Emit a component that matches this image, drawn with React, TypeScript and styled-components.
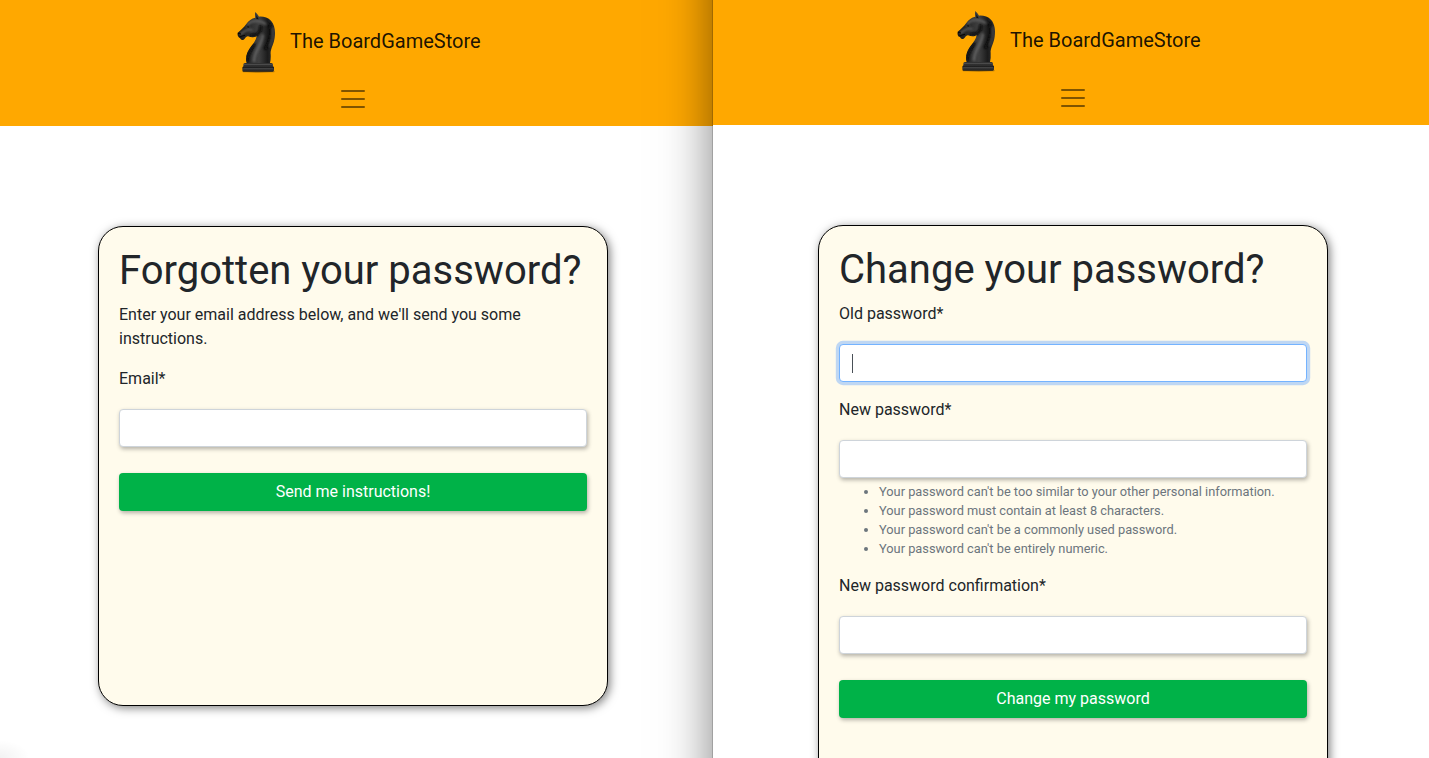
import React from "react";
import styled, { createGlobalStyle, css } from "styled-components";

const GlobalStyle = createGlobalStyle`
  *, *::before, *::after { box-sizing: border-box; }
  body {
    margin: 0;
    overflow: hidden;
    background: #fff;
    color: #212529;
    font-family: Roboto, "Liberation Sans", sans-serif;
    font-size: 16px;
    line-height: 1.5;
  }
`;

const Desktop = styled.div`
  display: flex;
  position: relative;
  width: 1429px;
  height: 758px;
  overflow: hidden;
`;

const Window = styled.section<{ $behind?: boolean }>`
  display: flex;
  flex-direction: column;
  flex: none;
  height: 758px;
  width: 720px;
  background: #fff;
  ${({ $behind }) =>
    $behind
      ? css`
          margin-left: -7px;
          padding-top: 1px;
          background: linear-gradient(#ffa800 126px, #fff 126px);
        `
      : css`
          position: relative;
          background: none;

          /* The window continues past the screen edges, so its shadow stays even. */
          &::before {
            content: "";
            position: absolute;
            inset: -100px 0;
            z-index: -1;
            background: #fff;
            box-shadow: 0 0 0 1px rgba(0, 0, 0, 0.16), 0 0 48px rgba(0, 0, 0, 0.5);
          }
          isolation: isolate;
        `}
`;

const CornerShade = styled.div`
  position: absolute;
  left: 0;
  bottom: 0;
  width: 30px;
  height: 18px;
  background: radial-gradient(ellipse at 0 100%, rgba(0, 0, 0, 0.05), transparent 70%);
`;

const NavBar = styled.header`
  display: flex;
  flex-direction: column;
  align-items: center;
  flex: none;
  height: 125px;
  padding-top: 4px;
  background: #ffa800;
`;

const Shaded = styled(NavBar)`
  background: none;
`;

const Brand = styled.div`
  display: flex;
  align-items: center;
  gap: 10px;
  height: 70px;
  width: 236px;
  color: rgba(0, 0, 0, 0.9);
  font-size: 20px;
  line-height: 30px;
  white-space: nowrap;
`;

const BrandName = styled.span`
  padding-top: 2px;
`;

const KnightArt = styled.svg`
  flex: none;
`;

const Toggler = styled.button`
  display: flex;
  margin: 9px 0 0;
  padding: 0;
  border: 0;
  background: none;
`;

const Card = styled.main<{ $height: number }>`
  display: flex;
  flex-direction: column;
  flex: none;
  align-self: center;
  width: 510px;
  height: ${({ $height }) => $height}px;
  margin-top: 100px;
  padding: 20px;
  border: 1px solid #000;
  border-radius: 25px;
  background: #fffbec;
  box-shadow: 2px 2px 10px rgba(0, 0, 0, 0.5);
`;

const Title = styled.h1`
  margin: 0 0 8px;
  font-size: 40px;
  font-weight: 400;
  line-height: 48px;
  white-space: nowrap;
`;

const Intro = styled.p`
  margin: 0 0 16px;
`;

const Field = styled.div`
  display: flex;
  flex-direction: column;
  margin-bottom: 16px;
`;

const Label = styled.label`
  margin-bottom: 18px;
  line-height: 24px;
`;

const Input = styled.div<{ $focused?: boolean }>`
  display: flex;
  align-items: center;
  height: 38px;
  padding: 0 12px;
  border: 1px solid ${({ $focused }) => ($focused ? "#74b3ff" : "#ced4da")};
  border-radius: 4px;
  background: #fff;
  box-shadow: ${({ $focused }) =>
    $focused ? "0 0 0 3.2px #bfd7f3" : "1px 2px 4px rgba(0, 0, 0, 0.3)"};
`;

const Caret = styled.span`
  width: 1px;
  height: 19px;
  background: #495057;
`;

const Hints = styled.ul`
  margin: 4px 0 0;
  padding-left: 40px;
  color: #6c757d;
  font-size: 12.8px;
  line-height: 19px;
`;

const Submit = styled.button`
  flex: none;
  height: 38px;
  margin: 10px 0 0;
  padding: 0;
  border: 0;
  border-radius: 4px;
  background: #00b248;
  box-shadow: 1px 2px 4px rgba(0, 0, 0, 0.3);
  color: #fff;
  font: 400 16px/24px Roboto, "Liberation Sans", sans-serif;
`;

function Knight({ id }: { id: string }) {
  const body = `${id}-body`;
  const base = `${id}-base`;
  const soft = `${id}-soft`;
  const clip = `${id}-clip`;
  const outline =
    "M61 21 C64 25 69 28 72 35 C84 34 99 37 108 47 C119 59 122 78 119 98 C117 116 105 134 107 147 Q108 163 105 174 L35 174 C29 156 38 137 49 123 C57 113 64 103 65 93 C58 99 48 97 39 94 C33 93 31 101 26 104 C19 108 16 101 13 96 L13 99 Q6 94 8 83 C16 77 27 67 34 57 C41 47 50 40 61 38 Q59 28 61 21Z";
  return (
    <KnightArt width="45" height="70" viewBox="0 0 135 210" aria-hidden="true">
      <defs>
        <linearGradient id={body} x1="0" x2="1">
          <stop offset="0" stopColor="#161616" />
          <stop offset=".3" stopColor="#2b2b2b" />
          <stop offset=".57" stopColor="#404040" />
          <stop offset=".8" stopColor="#1c1c1c" />
          <stop offset="1" stopColor="#343434" />
        </linearGradient>
        <linearGradient id={base} x1="0" x2="0" y1="0" y2="1">
          <stop offset="0" stopColor="#222" />
          <stop offset=".28" stopColor="#595959" />
          <stop offset=".45" stopColor="#242424" />
          <stop offset=".78" stopColor="#343434" />
          <stop offset="1" stopColor="#191919" />
        </linearGradient>
        <filter id={soft} x="-30%" y="-30%" width="160%" height="160%">
          <feGaussianBlur stdDeviation="3" />
        </filter>
        <clipPath id={clip}>
          <path d={outline} />
        </clipPath>
      </defs>
      <ellipse cx="71" cy="200" rx="49" ry="3" fill="#704b08" opacity=".55" />
      <path d={outline} fill={`url(#${body})`} />
      <g clipPath={`url(#${clip})`}>
        <g filter={`url(#${soft})`} fill="none" strokeLinecap="round">
          <path d="M38 59 C49 45 77 45 91 57" stroke="#606060" strokeWidth="6" />
          <path d="M18 87 C34 73 41 72 50 75" stroke="#555" strokeWidth="7" />
          <path d="M50 91 Q78 92 77 65" stroke="#090909" strokeWidth="10" />
          <path d="M83 92 C80 122 58 137 57 168" stroke="#606060" strokeWidth="8" />
          <path d="M103 58 C114 81 103 115 91 130" stroke="#080808" strokeWidth="9" />
          <path d="M113 70 Q116 96 105 124" stroke="#565656" strokeWidth="3" />
          <path d="M36 168 C37 145 47 134 58 121" stroke="#080808" strokeWidth="9" />
        </g>
        <path d="M32 66 Q39 59 46 66 Q40 72 32 66" fill="#080808" stroke="#555" strokeWidth="1.5" />
        <path d="M9 86 Q16 83 18 88 M12 97 Q21 92 30 91" fill="none" stroke="#050505" strokeWidth="3" />
        <path d="M63 29 L63 43 L72 44" fill="#101010" stroke="#555" strokeWidth="1.5" />
      </g>
      <path
        d="M30 174 H109 Q114 174 114 179 V184 L117 187 V196 Q117 200 113 200 H25 Q22 200 22 196 V188 L25 184 V179 Q25 174 30 174Z"
        fill={`url(#${base})`}
      />
      <path d="M26 181 H113 M23 187 H116" stroke="#111" strokeWidth="2" />
      <path d="M27 178 H110 M25 190 H114" stroke="#606060" strokeWidth="2" opacity=".75" />
    </KnightArt>
  );
}

function StoreHeader({ id, transparent }: { id: string; transparent?: boolean }) {
  const Bar = transparent ? Shaded : NavBar;
  return (
    <Bar>
      <Brand>
        <Knight id={id} />
        <BrandName>The BoardGameStore</BrandName>
      </Brand>
      <Toggler aria-label="Toggle navigation">
        <svg width="30" height="30" viewBox="0 0 30 30">
          <path
            d="M4 7h22M4 15h22M4 23h22"
            fill="none"
            stroke="rgba(0,0,0,.5)"
            strokeLinecap="round"
            strokeMiterlimit="10"
            strokeWidth="2"
          />
        </svg>
      </Toggler>
    </Bar>
  );
}

const rules = [
  "Your password can't be too similar to your other personal information.",
  "Your password must contain at least 8 characters.",
  "Your password can't be a commonly used password.",
  "Your password can't be entirely numeric.",
];

export default function App() {
  return (
    <>
      <GlobalStyle />
      <Desktop>
        <Window $behind>
          <StoreHeader id="reset" transparent />
          <Card $height={480}>
            <Title>Forgotten your password?</Title>
            <Intro>Enter your email address below, and we'll send you some instructions.</Intro>
            <Field>
              <Label>Email*</Label>
              <Input />
            </Field>
            <Submit>Send me instructions!</Submit>
          </Card>
        </Window>
        <Window>
          <StoreHeader id="change" />
          <Card $height={620}>
            <Title>Change your password?</Title>
            <Field>
              <Label>Old password*</Label>
              <Input $focused>
                <Caret />
              </Input>
            </Field>
            <Field>
              <Label>New password*</Label>
              <Input />
              <Hints>
                {rules.map((rule) => (
                  <li key={rule}>{rule}</li>
                ))}
              </Hints>
            </Field>
            <Field>
              <Label>New password confirmation*</Label>
              <Input />
            </Field>
            <Submit>Change my password</Submit>
          </Card>
        </Window>
        <CornerShade />
      </Desktop>
    </>
  );
}
